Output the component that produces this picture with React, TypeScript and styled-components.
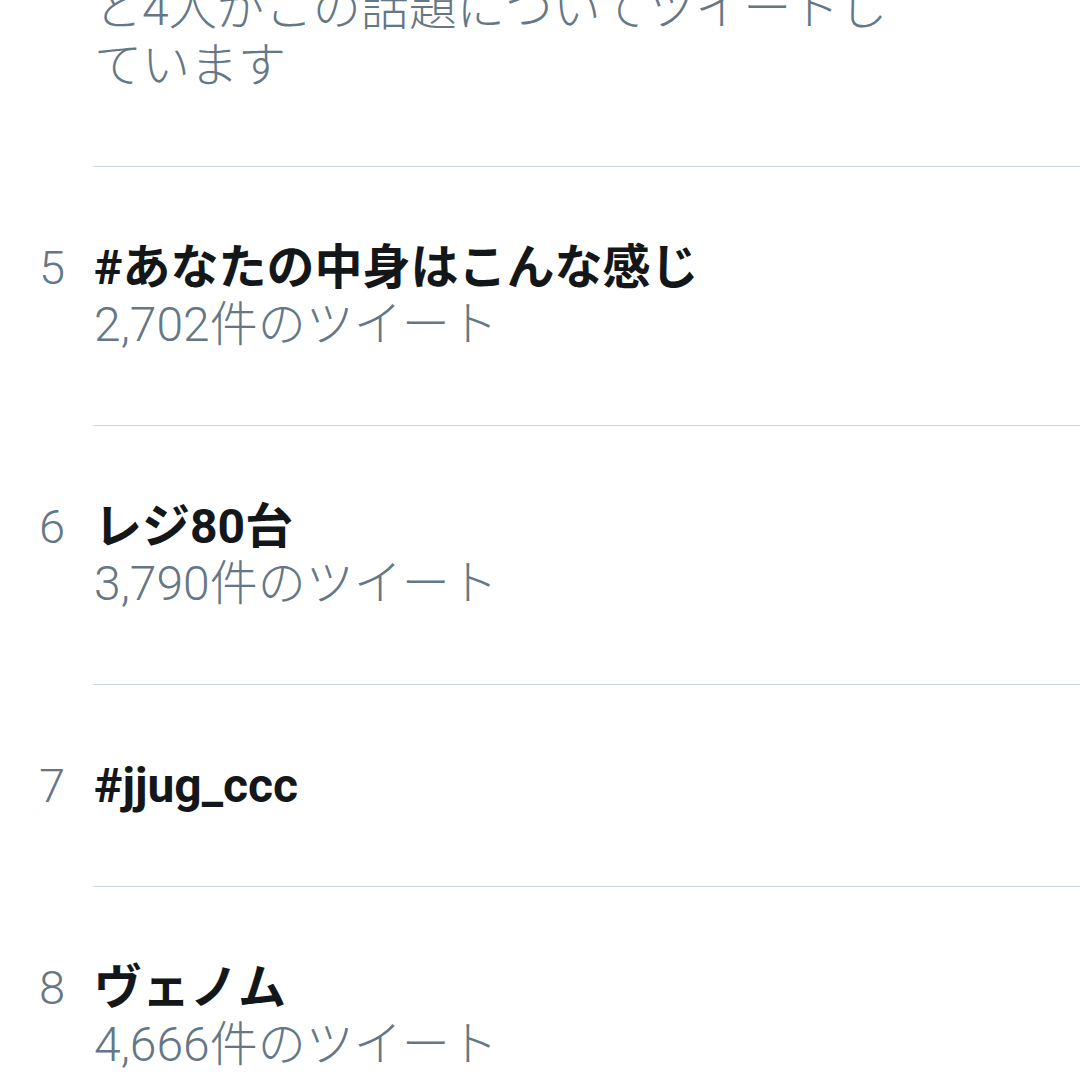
import React from "react";
import styled, { createGlobalStyle } from "styled-components";

const GlobalStyle = createGlobalStyle`
  html, body {
    margin: 0;
    padding: 0;
    background: #ffffff;
    overflow: hidden;
  }
  body {
    font-family: Roboto, "Noto Sans CJK JP", sans-serif;
  }
`;

const List = styled.div`
  width: 1080px;
  height: 1080px;
  overflow: hidden;
  background: #ffffff;
`;

const Scroller = styled.div`
  margin-top: -20px;
  display: flex;
  flex-direction: column;
`;

const Row = styled.div`
  display: grid;
  grid-template-columns: 93px 1fr;
`;

const Rank = styled.div`
  padding: 73px 0 0 39px;
  font-size: 47px;
  line-height: 56px;
  color: #657786;
  font-weight: 300;
`;

const Body = styled.div<{ $first?: boolean }>`
  padding: ${(p) => (p.$first ? "0" : "73px")} 0 72px 1px;
  border-bottom: 1.5px solid #ccd6dd;
  display: flex;
  flex-direction: column;
`;

const Title = styled.div`
  font-size: 48px;
  line-height: 56px;
  font-weight: 700;
  color: #14171a;
  white-space: nowrap;
`;

const Meta = styled.div`
  font-size: 48px;
  line-height: 57px;
  font-weight: 300;
  color: #657786;
  white-space: nowrap;
`;

type Trend = { rank: number; title: string; count?: string };

const trends: Trend[] = [
  { rank: 5, title: "#あなたの中身はこんな感じ", count: "2,702件のツイート" },
  { rank: 6, title: "レジ80台", count: "3,790件のツイート" },
  { rank: 7, title: "#jjug_ccc" },
  { rank: 8, title: "ヴェノム", count: "4,666件のツイート" },
];

export default function App() {
  return (
    <>
      <GlobalStyle />
      <List>
        <Scroller>
          <Row>
            <div />
            <Body $first>
              <Meta>と4人がこの話題についてツイートし</Meta>
              <Meta>ています</Meta>
            </Body>
          </Row>
          {trends.map((t) => (
            <Row key={t.rank}>
              <Rank>{t.rank}</Rank>
              <Body>
                <Title>{t.title}</Title>
                {t.count && <Meta>{t.count}</Meta>}
              </Body>
            </Row>
          ))}
        </Scroller>
      </List>
    </>
  );
}
